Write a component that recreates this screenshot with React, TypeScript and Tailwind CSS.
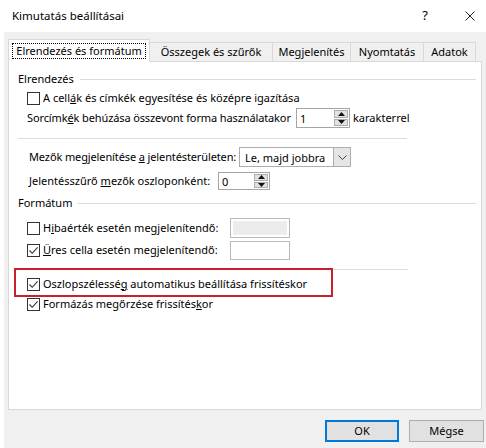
import React from 'react';

function Check({ checked = false }: { checked?: boolean }) {
  return (
    <span className="flex h-[13px] w-[13px] shrink-0 items-center justify-center border border-[#333333] bg-white">
      {checked ? (
        <svg width="11" height="11" viewBox="0 0 11 11">
          <path d="M1.5 5.5 L4.2 8.3 L9.6 2.3" fill="none" stroke="#333333" strokeWidth="1.1" />
        </svg>
      ) : null}
    </span>
  );
}

function Spinner({ value, width }: { value: string; width: string }) {
  return (
    <div className={`flex h-full border border-[#a5a5a5] bg-white ${width}`}>
      <span className="flex-1 self-center pl-[3px] leading-none">{value}</span>
      <div className="flex w-[16px] flex-col gap-[1px] p-[1px]">
        <div className="flex flex-1 items-center justify-center border border-[#adadad] bg-[#e1e1e1]">
          <svg width="7" height="4" viewBox="0 0 7 4">
            <path d="M0 4 L3.5 0 L7 4 Z" fill="#111" />
          </svg>
        </div>
        <div className="flex flex-1 items-center justify-center border border-[#adadad] bg-[#e1e1e1]">
          <svg width="7" height="4" viewBox="0 0 7 4">
            <path d="M0 0 L7 0 L3.5 4 Z" fill="#111" />
          </svg>
        </div>
      </div>
    </div>
  );
}

function GroupHeader({ label }: { label: string }) {
  return (
    <div className="flex h-[19px] items-center pl-[9px] pr-[5px]">
      <span className="pr-[6px]">{label}</span>
      <div className="h-px flex-1 bg-[#dcdcdc]" />
    </div>
  );
}

export default function App() {
  const tabs = [
    { label: 'Összegek és szűrők', w: 'w-[123px]' },
    { label: 'Megjelenítés', w: 'w-[78px]' },
    { label: 'Nyomtatás', w: 'w-[73px]' },
    { label: 'Adatok', w: 'w-[52px]' },
  ];

  return (
    <div className="h-[448px] w-[486px] whitespace-nowrap bg-white text-[11px] text-black font-['Noto_Sans','Open_Sans',sans-serif]">
      {/* title bar */}
      <div className="flex h-[32px] items-center pl-[12px]">
        <span className="text-[11.5px]">Kimutatás beállításai</span>
        <span className="ml-auto mr-[37px] text-[13px]">?</span>
        <svg width="10" height="10" viewBox="0 0 10 10" className="mr-[11px]">
          <path d="M0.5 0.5 L9.5 9.5 M9.5 0.5 L0.5 9.5" stroke="#222" strokeWidth="1" />
        </svg>
      </div>

      <div className="ml-[4px] h-[416px] bg-[#f0f0f0] pt-[7px]">
        {/* tabs */}
        <div className="relative z-10 ml-[4px] flex h-[23px] items-end">
          <div className="flex h-[23px] w-[142px] items-start justify-center border border-b-0 border-[#d9d9d9] bg-white pt-[3px]">
            <span className="border border-dotted border-black px-[3px] leading-[14px]">Elrendezés és formátum</span>
          </div>
          {tabs.map((t) => (
            <div
              key={t.label}
              className={`flex h-[20px] items-center justify-center border border-l-0 border-[#d9d9d9] bg-[#f0f0f0] ${t.w}`}
            >
              {t.label}
            </div>
          ))}
        </div>

        {/* panel */}
        <div className="relative -mt-px ml-[4px] h-[349px] w-[474px] border border-[#d9d9d9] bg-white">
          <div className="mt-[8px]">
            <GroupHeader label="Elrendezés" />
          </div>
          <div className="flex h-[19px] items-center gap-[3px] pl-[18px]">
            <Check />
            <span>
              A cell<u>á</u>k és címkék egyesítése és középre igazítása
            </span>
          </div>
          <div className="flex h-[20px] items-center pl-[18px]">
            <span className="w-[269px] tracking-[-0.12px]">
              Sorcímk<u>é</u>k behúzása összevont forma használatakor
            </span>
            <Spinner value="1" width="w-[54px]" />
            <span className="ml-[3px]">karakterrel</span>
          </div>

          <div className="ml-[9px] mt-[10px] h-px w-[389px] bg-[#dcdcdc]" />

          <div className="mt-[8px] flex h-[20px] items-center pl-[20px]">
            <span className="w-[210px] tracking-[-0.12px]">
              Mezők megjelenítése <u>a</u> jelentésterületen:
            </span>
            <div className="flex h-full w-[112px] border border-[#adadad] bg-white">
              <span className="flex-1 self-center pl-[5px] leading-none">Le, majd jobbra</span>
              <div className="flex w-[17px] items-center justify-center border-l border-[#adadad] bg-[#e5e5e5]">
                <svg width="9" height="5" viewBox="0 0 9 5">
                  <path d="M0.5 0.5 L4.5 4.5 L8.5 0.5" fill="none" stroke="#444" strokeWidth="1" />
                </svg>
              </div>
            </div>
          </div>
          <div className="mt-[5px] flex h-[18px] items-center pl-[20px]">
            <span className="w-[189px]">
              Jelentésszűrő <u>m</u>ezők oszloponként:
            </span>
            <Spinner value="0" width="w-[52px]" />
          </div>

          <div className="mt-[4px]">
            <GroupHeader label="Formátum" />
          </div>
          <div className="mt-[5px] flex h-[20px] items-center pl-[18px]">
            <div className="flex w-[203px] items-center gap-[3px]">
              <Check />
              <span>
                H<u>i</u>baérték esetén megjelenítendő:
              </span>
            </div>
            <div className="h-full w-[60px] border border-[#b9b9b9] bg-white p-[2px]">
              <div className="h-full w-full bg-[#ececec]" />
            </div>
          </div>
          <div className="mt-[3px] flex h-[19px] items-center pl-[18px]">
            <div className="flex w-[203px] items-center gap-[3px]">
              <Check checked />
              <span>
                <u>Ü</u>res cella esetén megjelenítendő:
              </span>
            </div>
            <div className="h-full w-[60px] border border-[#b9b9b9] bg-white" />
          </div>

          <div className="ml-[18px] mt-[9px] h-px w-[381px] bg-[#dcdcdc]" />

          <div className="mt-[4px] flex h-[20px] items-center gap-[3px] pl-[18px]">
            <Check checked />
            <span>
              Oszlopszélessé<u>g</u> automatikus beállítása frissítéskor
            </span>
          </div>
          <div className="flex h-[20px] items-center gap-[3px] pl-[18px]">
            <Check checked />
            <span>
              Formázás megőrzése frissítés<u>k</u>or
            </span>
          </div>

          {/* red highlight annotation */}
          <div className="absolute left-[5px] top-[206px] h-[29px] w-[319px] border-2 border-[#c8202c]" />
        </div>

        {/* buttons */}
        <div className="mt-[10px] flex justify-end gap-[10px] pr-[2px]">
          <button className="h-[22px] w-[74px] border-2 border-[#0078d7] bg-[#e1e1e1] text-[11px]">OK</button>
          <button className="h-[22px] w-[75px] border border-[#adadad] bg-[#e1e1e1] text-[11px]">Mégse</button>
        </div>
      </div>
    </div>
  );
}
